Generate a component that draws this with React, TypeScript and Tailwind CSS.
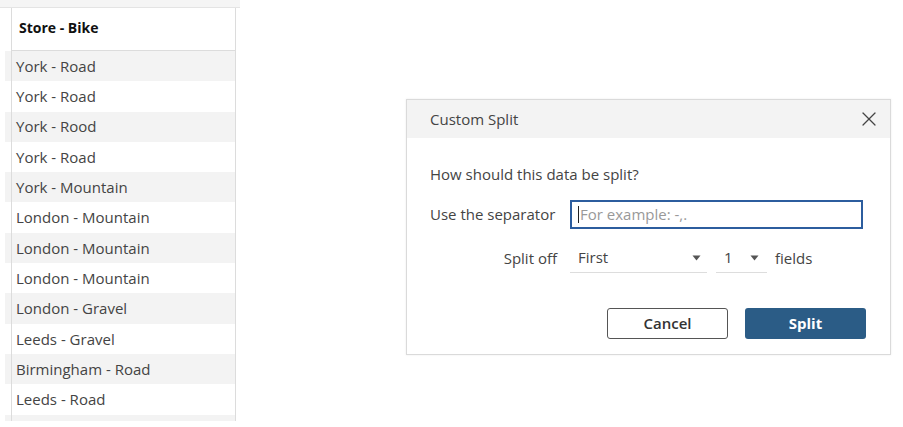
import React from "react";
import { X } from "lucide-react";

const rows = [
  "York - Road",
  "York - Road",
  "York - Rood",
  "York - Road",
  "York - Mountain",
  "London - Mountain",
  "London - Mountain",
  "London - Mountain",
  "London - Gravel",
  "Leeds - Gravel",
  "Birmingham - Road",
  "Leeds - Road",
  "",
];

const font = { fontFamily: "'Open Sans', 'Liberation Sans', sans-serif" };

const Caret = () => (
  <svg width="9" height="6" viewBox="0 0 9 6" className="shrink-0">
    <path d="M0.5 0.5h8l-4 5z" fill="#555" />
  </svg>
);

const App: React.FC = () => {
  return (
    <div className="flex h-[427px] w-[903px] overflow-hidden bg-white text-[#333]" style={font}>
      {/* data grid column */}
      <div className="flex h-[421px] w-[240px] shrink-0 flex-col overflow-hidden">
        <div className="h-[8px] shrink-0 border-b border-[#e4e4e4] bg-[#f5f5f5]" />
        <div className="flex flex-1 flex-col overflow-hidden">
          <div className="ml-[11px] mr-[4px] flex h-[43px] shrink-0 items-center border-x border-b border-[#dcdcdc] pb-[3px] pl-[7px] text-[14px] font-bold text-[#111]">
            Store - Bike
          </div>
          {rows.map((r, i) => (
            <div
              key={i}
              className={`ml-[5px] mr-[4px] flex h-[30.3px] shrink-0 items-center border-r border-[#dcdcdc] text-[15px] text-[#444] ${i % 2 === 0 ? "bg-[#f3f3f3]" : "bg-white"}`}
            >
              <div className="ml-[6px] flex h-full items-center border-l border-[#dcdcdc] pl-[4px]">{r}</div>
            </div>
          ))}
        </div>
      </div>

      {/* dialog */}
      <div className="ml-[166px] mt-[99px] flex h-[256px] w-[485px] shrink-0 flex-col border border-[#dadada] bg-white shadow-[0_0_2px_rgba(0,0,0,0.08)]">
        <div className="flex h-[38px] shrink-0 items-center justify-between bg-[#f3f3f3] pl-[23px] pr-[9px]">
          <span className="text-[15px] text-[#444]">Custom Split</span>
          <X className="h-[24px] w-[24px] text-[#444]" strokeWidth={1.2} />
        </div>
        <div className="flex flex-col pl-[23px] pr-[27px] text-[15px] text-[#444]">
          <div className="mt-[26px] leading-[20px]">How should this data be split?</div>
          <div className="mt-[16px] flex items-center">
            <span className="w-[140px] shrink-0">Use the separator</span>
            <div className="flex h-[29px] w-[293px] items-center border-2 border-[#2c5d9e] pl-[6px]">
              <span className="mr-[1px] h-[17px] w-[1px] bg-[#222]" />
              <span className="text-[#999]">For example: -,.</span>
            </div>
          </div>
          <div className="mt-[14px] flex items-center">
            <span className="w-[140px] shrink-0 pr-[13px] text-right">Split off</span>
            <div className="flex h-[30px] w-[137px] items-center justify-between border-b border-[#ddd] pl-[8px] pr-[6px]">
              <span>First</span>
              <Caret />
            </div>
            <div className="ml-[9px] flex h-[30px] w-[51px] items-center justify-between border-b border-[#ddd] pl-[8px] pr-[8px]">
              <span>1</span>
              <Caret />
            </div>
            <span className="ml-[8px]">fields</span>
          </div>
          <div className="mt-[35px] flex justify-end gap-[17px]">
            <button className="h-[31px] w-[121px] rounded-[3px] border border-[#555] bg-white text-[15px] font-semibold text-[#333]">
              Cancel
            </button>
            <button className="mr-[-3px] h-[31px] w-[121px] rounded-[3px] bg-[#2b5c86] text-[15px] font-bold text-white">
              Split
            </button>
          </div>
        </div>
      </div>
    </div>
  );
};

export default App;
